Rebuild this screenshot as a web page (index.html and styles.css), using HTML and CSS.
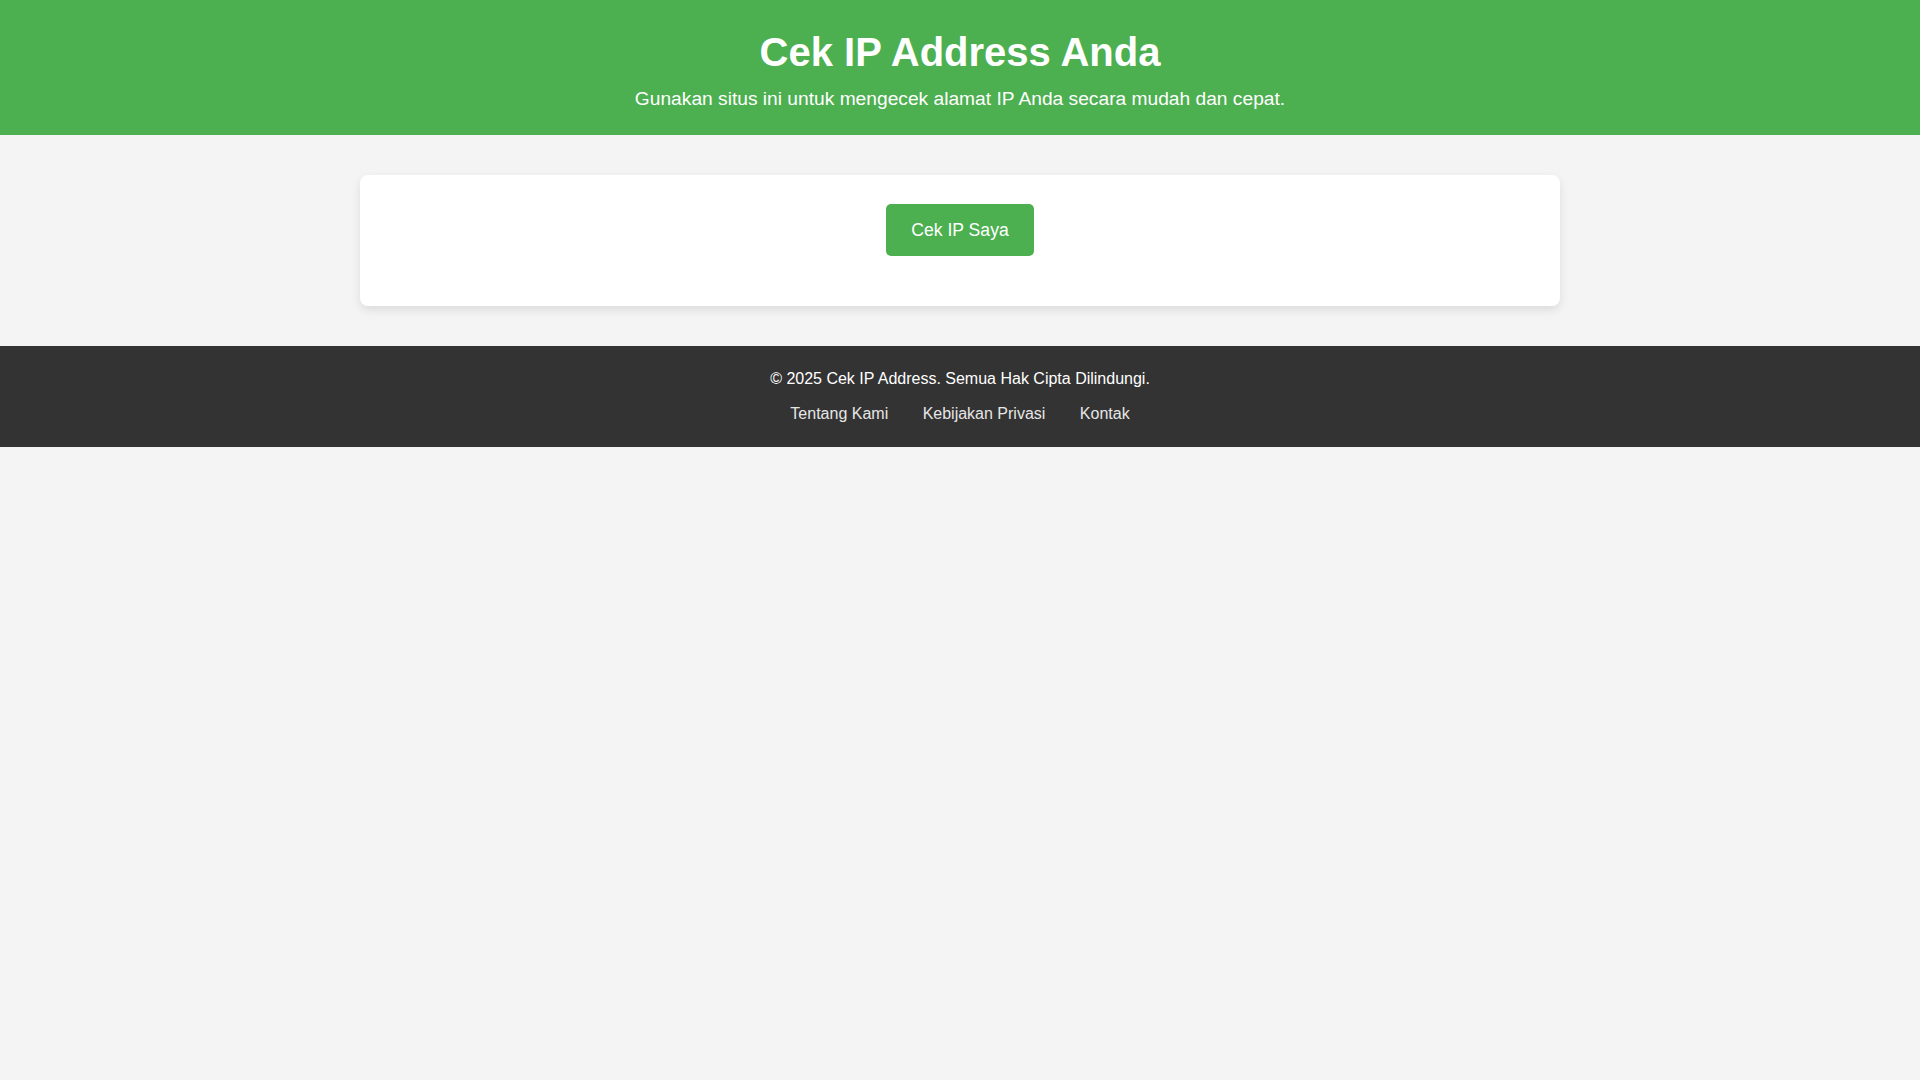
FILE: index.html
```html
<!DOCTYPE html>
<html lang="id">
<head>
<meta charset="utf-8">
<title>Cek IP Address Anda</title>
<link rel="stylesheet" href="styles.css">
</head>
<body>
<header class="site-header">
  <h1 class="title">Cek IP Address Anda</h1>
  <p class="subtitle">Gunakan situs ini untuk mengecek alamat IP Anda secara mudah dan cepat.</p>
</header>
<main class="container">
  <section class="card">
    <button class="btn" type="button">Cek IP Saya</button>
    <div class="result"></div>
  </section>
</main>
<footer class="site-footer">
  <p class="copy">&copy; 2025 Cek IP Address. Semua Hak Cipta Dilindungi.</p>
  <nav class="links">
    <a href="#">Tentang Kami</a>
    <a href="#">Kebijakan Privasi</a>
    <a href="#">Kontak</a>
  </nav>
</footer>
</body>
</html>
```

FILE: styles.css
```css
html, body {
  margin: 0;
  padding: 0;
}
body {
  font-family: "Liberation Sans", Arial, sans-serif;
  background: #f4f4f4;
  color: #333;
}
.site-header {
  background: #4caf50;
  color: #fff;
  text-align: center;
  padding: 29px 20px 25px;
}
.title {
  margin: 0 0 13px;
  font-size: 40px;
  font-weight: bold;
  line-height: 46px;
}
.subtitle {
  margin: 0;
  font-size: 19.2px;
  line-height: 22px;
}
.container {
  max-width: 1200px;
  margin: 40px auto;
}
.card {
  background: #fff;
  border-radius: 8px;
  box-shadow: 0 4px 10px rgba(0, 0, 0, 0.1);
  padding: 29px 30px 30px;
  text-align: center;
}
.btn {
  font-family: "Liberation Sans", Arial, sans-serif;
  font-size: 17.6px;
  line-height: 20px;
  padding: 16px 25px;
  background: #4caf50;
  color: #fff;
  border: none;
  border-radius: 5px;
  cursor: pointer;
}
.result {
  margin-top: 20px;
}
.site-footer {
  background: #333;
  color: #fff;
  text-align: center;
  padding: 24px 20px 23px;
  font-size: 16px;
  line-height: 18.4px;
}
.copy {
  margin: 0 0 17px;
}
.links a {
  color: #e6e6e6;
  text-decoration: none;
  margin: 0 15px;
}
```
